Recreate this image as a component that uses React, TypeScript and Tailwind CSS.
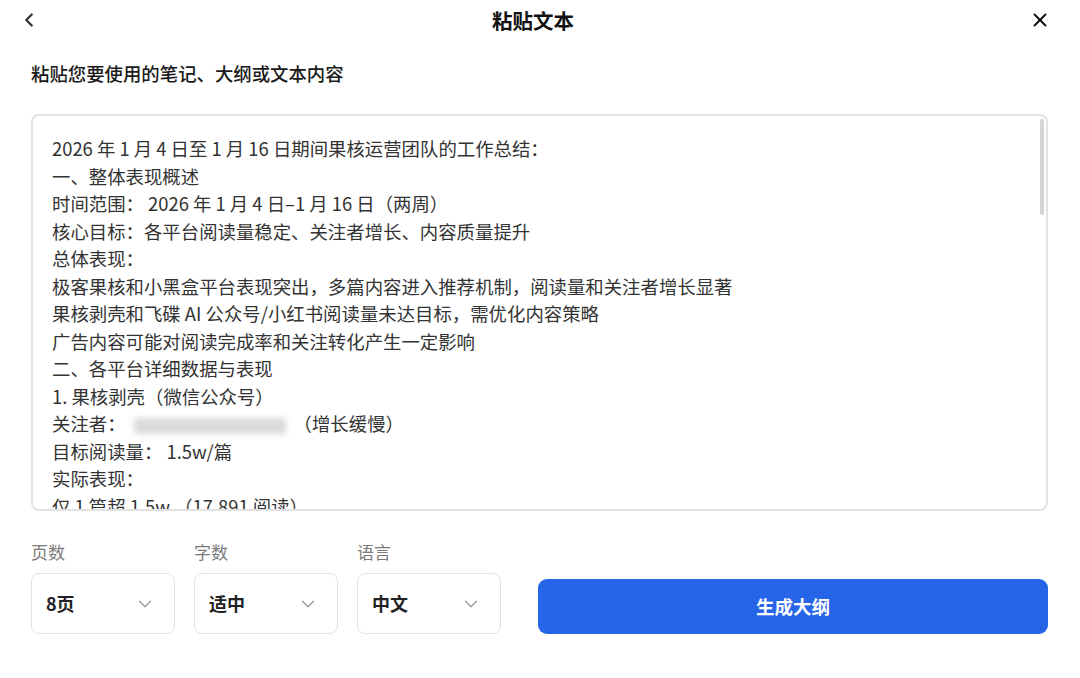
import React from "react";
import { ChevronLeft, ChevronDown, X } from "lucide-react";

const lines: React.ReactNode[] = [
  "2026 年 1 月 4 日至 1 月 16 日期间果核运营团队的工作总结：",
  "一、整体表现概述",
  "时间范围： 2026 年 1 月 4 日–1 月 16 日（两周）",
  "核心目标：各平台阅读量稳定、关注者增长、内容质量提升",
  "总体表现：",
  "极客果核和小黑盒平台表现突出，多篇内容进入推荐机制，阅读量和关注者增长显著",
  "果核剥壳和飞碟 AI 公众号/小红书阅读量未达目标，需优化内容策略",
  "广告内容可能对阅读完成率和关注转化产生一定影响",
  "二、各平台详细数据与表现",
  "1. 果核剥壳（微信公众号）",
  <>
    关注者：
    <span className="inline-block align-middle mx-[8px] w-[152px] h-[16px] rounded-[4px] bg-[#d9d9d9] blur-[3px]" />
    （增长缓慢）
  </>,
  "目标阅读量： 1.5w/篇",
  "实际表现：",
  "仅 1 篇超 1.5w （17,891 阅读）",
];

function Select({ label, value }: { label: string; value: string }) {
  return (
    <div className="flex flex-col w-[144px]">
      <div className="text-[17px] leading-[24px] text-[#7a7a7a]">{label}</div>
      <div className="mt-[9px] h-[61px] rounded-[8px] border border-[#e3e3e3] bg-white flex items-center justify-between pl-[14px] pr-[18px]">
        <span className="text-[18px] font-bold text-[#222]">{value}</span>
        <ChevronDown size={22} strokeWidth={1.5} className="text-[#9a9a9a]" />
      </div>
    </div>
  );
}

export default function App() {
  return (
    <div
      className="w-[1080px] h-[678px] bg-white overflow-hidden"
      style={{ fontFamily: '"Noto Sans CJK SC", "Noto Sans", sans-serif' }}
    >
      {/* top bar */}
      <div className="relative h-[40px] flex items-center justify-center">
        <ChevronLeft
          size={22}
          strokeWidth={2.5}
          className="absolute left-[18px] top-[9px] text-[#333]"
        />
        <div className="mr-[14px] text-[20.5px] font-bold text-[#111]">粘贴文本</div>
        <X
          size={22}
          strokeWidth={2.2}
          className="absolute right-[29px] top-[9px] text-[#111]"
        />
      </div>

      <div className="px-[31px] pr-[32px]">
        <div className="mt-[20px] text-[18.4px] leading-[26px] font-medium text-[#1a1a1a]">
          粘贴您要使用的笔记、大纲或文本内容
        </div>

        {/* pasted text area */}
        <div className="relative mt-[28px] h-[397px] rounded-[8px] border-2 border-[#e2e2e2] overflow-hidden">
          <div className="pl-[19px] pt-[19px] text-[18.4px] leading-[27.5px] text-[#333] whitespace-nowrap">
            {lines.map((l, i) => (
              <div key={i}>{l}</div>
            ))}
          </div>
          <div className="absolute right-[2px] top-[3px] w-[4px] h-[96px] rounded-full bg-[#d4d4d4]" />
        </div>

        {/* options row */}
        <div className="mt-[29px] flex items-end">
          <div className="flex gap-[19px]">
            <Select label="页数" value="8页" />
            <Select label="字数" value="适中" />
            <Select label="语言" value="中文" />
          </div>
          <button className="ml-[37px] flex-1 h-[55px] rounded-[9px] bg-[#2664e8] text-white text-[18.5px] font-bold">
            生成大纲
          </button>
        </div>
      </div>
    </div>
  );
}
